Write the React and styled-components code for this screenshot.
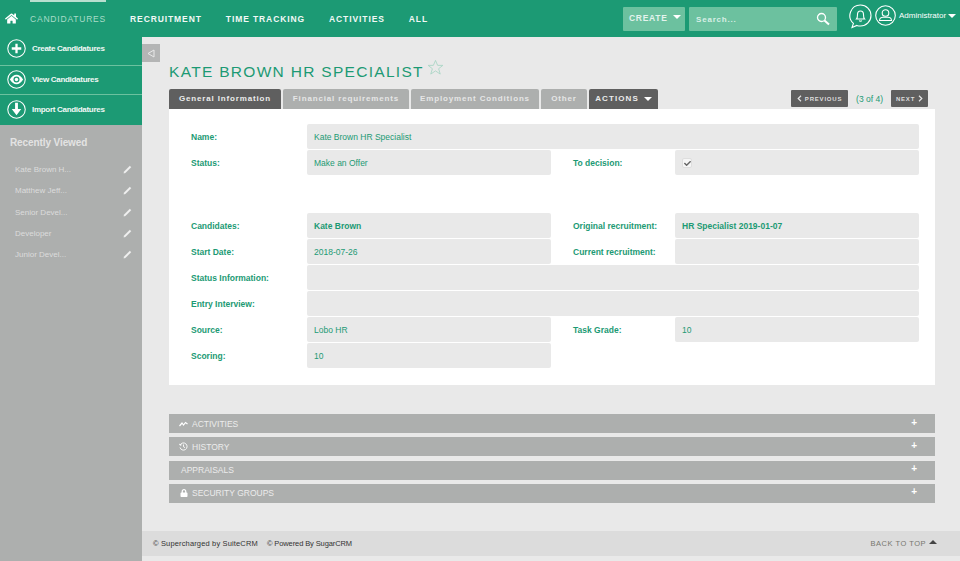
import React from "react"
import styled, { createGlobalStyle } from "styled-components"
import { FaHome, FaLock, FaCheck } from "react-icons/fa"

const GREEN = "#1c9a74"
const GREY = "#adafae"
const FONT = `"Liberation Sans", Arial, sans-serif`

const Global = createGlobalStyle`
  html, body { margin: 0; padding: 0; background: #e9e9e9; }
  body { font-family: ${FONT}; height: 561px; overflow: hidden; }
  * { box-sizing: border-box; }
`

const Page = styled.div`
  width: 960px;
  height: 561px;
  display: flex;
  flex-direction: column;
`

const Nav = styled.header`
  height: 37px;
  background: ${GREEN};
  display: flex;
  align-items: center;
  flex-shrink: 0;
  color: #fff;
`

const HomeLink = styled.div`
  width: 30px;
  display: flex;
  padding: 0 0 0 5px;
  font-size: 13px;
`

const NavItem = styled.div`
  height: 37px;
  margin-right: 24px;
  padding-top: 12px;
  font-size: 8.5px;
  font-weight: ${(p) => (p.$active ? 400 : 700)};
  letter-spacing: ${(p) => (p.$active ? 0.8 : 0.9)}px;
  color: ${(p) => (p.$active ? "#a9dcc8" : "#f2f8f6")};
  border-top: 2px solid ${(p) => (p.$active ? "#b9dfcf" : "transparent")};
`

const NavRight = styled.div`
  margin-left: auto;
  display: flex;
  align-items: flex-start;
  height: 37px;
  padding-top: 7px;
`

const CreateBtn = styled.div`
  width: 62px;
  height: 24px;
  background: #6cc19f;
  border-radius: 1px;
  margin-right: 4px;
  padding: 6px 0 0 6px;
  font-size: 8.5px;
  font-weight: 700;
  letter-spacing: 0.7px;
  color: #e4f3ed;
  display: flex;
  gap: 5px;
`

const Caret = styled.span`
  display: inline-block;
  width: 0;
  height: 0;
  margin-top: ${(p) => p.$top ?? 3}px;
  border-left: 4px solid transparent;
  border-right: 4px solid transparent;
  border-top: 4px solid ${(p) => p.$color || "#fff"};
`

const SearchBox = styled.div`
  width: 148px;
  height: 24px;
  background: #6cc19f;
  border-radius: 1px;
  margin-right: 12px;
  padding: 0 7px;
  display: flex;
  align-items: center;
  justify-content: space-between;
  font-size: 8px;
  font-weight: 700;
  letter-spacing: 0.8px;
  color: #d9efe6;
`

const BellWrap = styled.div`
  margin: -3px 3px 0 0;
  height: 25px;
`

const UserBlock = styled.div`
  display: flex;
  align-items: center;
  height: 21px;
  margin-top: -2px;
  font-size: 8px;
  color: #fff;
  width: 85px;
`

const Body = styled.div`
  flex: 1;
  display: flex;
  min-height: 0;
`

const Sidebar = styled.aside`
  width: 142px;
  flex-shrink: 0;
  background: ${GREY};
`

const SideActions = styled.div`
  background: ${GREEN};
`

const SideAction = styled.div`
  height: ${(p) => (p.$last ? 30 : 29)}px;
  display: flex;
  align-items: center;
  gap: 6px;
  padding: 0 0 ${(p) => (p.$first ? 5 : 2)}px 7px;
  font-size: 8px;
  font-weight: 700;
  letter-spacing: -0.3px;
  color: #f2f8f6;
  border-bottom: ${(p) => (p.$last ? "none" : "1px solid #6cc19f")};
`

const SideTitle = styled.div`
  margin: 12px 0 0 10px;
  font-size: 10px;
  font-weight: 700;
  letter-spacing: -0.1px;
  color: #e3e3e3;
`

const Recent = styled.div`
  margin-top: 11px;
`

const RecentRow = styled.div`
  height: 21.3px;
  display: flex;
  align-items: center;
  justify-content: space-between;
  padding: 0 10px 0 15px;
  font-size: 8px;
  color: #dcdcdc;
`

const Main = styled.main`
  flex: 1;
  display: flex;
  flex-direction: column;
  position: relative;
  background: #e9e9e9;
`

const Collapse = styled.div`
  position: absolute;
  top: 7px;
  left: 0;
  width: 18px;
  height: 18px;
  background: #b4b5b5;
  display: flex;
  align-items: center;
  justify-content: center;
`

const Content = styled.div`
  padding: 0 25px 0 27px;
`

const TitleRow = styled.div`
  display: flex;
  align-items: flex-start;
  height: 52px;
  padding-top: 25px;
`

const Title = styled.h1`
  margin: 0;
  font-size: 15.5px;
  line-height: 19px;
  font-weight: 400;
  letter-spacing: 1.3px;
  color: ${GREEN};
`

const TabBar = styled.div`
  display: flex;
  align-items: flex-end;
  height: 20px;
`

const Tab = styled.div`
  height: 20px;
  margin-right: 2px;
  padding-bottom: 1px;
  width: ${(p) => p.$w}px;
  white-space: nowrap;
  background: ${(p) => (p.$dark ? "#5f5f5f" : GREY)};
  border-radius: 2px 2px 0 0;
  font-size: 8px;
  font-weight: 700;
  letter-spacing: ${(p) => (p.$wide ? 1.1 : 0.85)}px;
  color: ${(p) => (p.$dark ? "#ececec" : "#e6e6e6")};
  display: flex;
  align-items: center;
  justify-content: center;
  gap: 5px;
`

const Pager = styled.div`
  margin-left: auto;
  margin-right: 7px;
  align-self: flex-start;
  display: flex;
  align-items: center;
  gap: 8px;
  height: 17px;
  margin-top: 1px;
  font-size: 8.5px;
  color: ${GREEN};
`

const PageBtn = styled.div`
  height: 17px;
  width: ${(p) => p.$w}px;
  background: #5f5f5f;
  border-radius: 1px;
  display: flex;
  align-items: center;
  justify-content: center;
  gap: 3px;
  font-size: 6px;
  font-weight: 700;
  letter-spacing: 0.8px;
  color: #dedede;
`

const Panel = styled.section`
  background: #fff;
  height: 276px;
  padding: 15px 16px 0 22px;
`

const Grid = styled.div`
  display: grid;
  grid-template-columns: 116px 244px 124px 244px;
  grid-auto-rows: auto;
  row-gap: 1px;
`

const Label = styled.div`
  height: 25px;
  display: flex;
  align-items: center;
  padding-left: ${(p) => (p.$right ? 22 : 0)}px;
  font-size: 8.5px;
  font-weight: 700;
  color: ${GREEN};
  white-space: nowrap;
`

const Value = styled.div`
  height: 25px;
  display: flex;
  align-items: center;
  padding: 1px 7px 0;
  background: #e9e9e9;
  border-radius: 2px;
  font-size: 8.5px;
  font-weight: ${(p) => (p.$bold ? 700 : 400)};
  color: ${GREEN};
  grid-column: ${(p) => p.$span || "auto"};
`

const Gap = styled.div`
  grid-column: 1 / -1;
  height: 36px;
`

const CheckBox = styled.span`
  width: 10px;
  height: 10px;
  background: #f6f6f6;
  border: 1px solid #dedede;
  border-radius: 2px;
  display: flex;
  align-items: center;
  justify-content: center;
  font-size: 7px;
  color: #666;
`

const Accordion = styled.div`
  margin-top: 29px;
  display: flex;
  flex-direction: column;
  gap: 4.33px;
`

const AccRow = styled.div`
  height: 19px;
  background: ${GREY};
  display: flex;
  align-items: center;
  gap: 4px;
  padding: 0 18px 0 ${(p) => (p.$plain ? 12 : 10)}px;
  font-size: 8.5px;
  color: #ececec;
`

const AccIcon = styled.span`
  width: 9px;
  display: flex;
  align-items: center;
  justify-content: center;
  font-size: 8px;
  color: #fff;
`

const Plus = styled.span`
  margin-left: auto;
  margin-top: -3px;
  font-size: 10px;
  font-weight: 700;
  color: #fff;
`

const Footer = styled.footer`
  margin-top: 28px;
  height: 25px;
  background: #dcdcdc;
  display: flex;
  align-items: center;
  padding: 0 23px 0 11px;
  font-size: 7.5px;
  color: #333;
`

const FooterText = styled.span`
  margin-right: 9px;
  letter-spacing: ${(p) => p.$spacing || 0}px;
`

const BackToTop = styled.div`
  margin-left: auto;
  display: flex;
  gap: 3px;
  font-size: 7.5px;
  letter-spacing: 0.5px;
  color: #77776f;
`

const CaretUp = styled.span`
  width: 0;
  height: 0;
  margin-top: 1px;
  border-left: 4px solid transparent;
  border-right: 4px solid transparent;
  border-bottom: 4px solid #444;
`

const Ring = ({ children }) => (
  <svg width="19" height="19" viewBox="0 0 20 20" fill="none" stroke="#fff" strokeWidth="1.1" style={{ flexShrink: 0 }}>
    <circle cx="10" cy="10" r="9.2" />
    {children}
  </svg>
)

const PlusIcon = () => (
  <Ring>
    <path d="M10 5v10M5 10h10" strokeWidth="2.4" />
  </Ring>
)

const EyeIcon = () => (
  <Ring>
    <path d="M3 10c2-3.4 4.4-5 7-5s5 1.6 7 5c-2 3.4-4.4 5-7 5s-5-1.600-7-5z" fill="#fff" stroke="none" />
    <circle cx="10" cy="10" r="3.2" fill={GREEN} stroke="none" />
    <circle cx="10" cy="10" r="1.8" fill="#fff" stroke="none" />
  </Ring>
)

const ImportIcon = () => (
  <Ring>
    <path d="M8.500 3h3v6.500h3.500L10 16 5 9.500h3.500z" fill="#fff" stroke="none" />
  </Ring>
)

const PencilIcon = () => (
  <svg width="9" height="9" viewBox="0 0 9 9" fill="none" stroke="#f1f1f1">
    <path d="M0.800 8.200l.5-1.700L6.800 1l1.200 1.200L2.500 7.700z" fill="#f1f1f1" strokeWidth="0.4" />
  </svg>
)

const SearchIcon = () => (
  <svg width="14" height="14" viewBox="0 0 14 14" fill="none" stroke="#fff">
    <circle cx="5.500" cy="5.500" r="4" strokeWidth="1.3" />
    <path d="M8.500 8.500L13 12.500" strokeWidth="2" />
  </svg>
)

const BellIcon = () => (
  <svg width="23" height="25" viewBox="0 0 23 25" fill="none" stroke="#fff" strokeWidth="1.1">
    <path d="M11.500 1a10.500 10.500 0 0 1 0 21c-1.300 0-2.500-.2-3.600-.6L3 23.500l1.400-4.200A10.500 10.500 0 0 1 11.500 1z" />
    <path d="M7.500 15c1-1 1-2.500 1-4.500 0-2 1.300-3.500 3-3.500s3 1.500 3 3.500c0 2 0 3.500 1 4.500z" />
    <path d="M10.300 16.500c.3 1 2.100 1 2.400 0" />
  </svg>
)

const UserIcon = () => (
  <svg width="21" height="21" viewBox="0 0 21 21" fill="none" stroke="#fff" strokeWidth="1.1" style={{ marginRight: 3, flexShrink: 0 }}>
    <circle cx="10.500" cy="10.500" r="9.800" />
    <circle cx="10.500" cy="8" r="3.300" />
    <path d="M4.500 15.500c0-2.200 2-3.300 3.500-3.300h5c1.500 0 3.500 1.100 3.500 3.300z" />
  </svg>
)

const TrendIcon = () => (
  <svg width="9" height="6" viewBox="0 0 9 6" fill="none" stroke="#fff" strokeWidth="1.2">
    <path d="M0.500 5L3 2l1.500 2L6.500 1.500 8.500 3" />
  </svg>
)

const HistoryIcon = () => (
  <svg width="9" height="9" viewBox="0 0 9 9" fill="none" stroke="#fff" strokeWidth="0.9">
    <path d="M1.200 3a3.600 3.600 0 1 1-.2 2.500" />
    <path d="M4.500 2.500v2.200l1.500 1" />
    <path d="M0.400 1.800l.7 1.500 1.500-.5" />
  </svg>
)

const Chevron = ({ right }) => (
  <svg width="5" height="7" viewBox="0 0 5 7" fill="none" stroke="#e6e6e6" strokeWidth="1.2">
    <path d={right ? "M1 .8l2.800 2.700L1 6.200" : "M4 .8L1.200 3.500 4 6.200"} />
  </svg>
)

const CollapseIcon = () => (
  <svg width="8" height="9" viewBox="0 0 8 9" fill="none" stroke="#e9e9e9">
    <path d="M7 1v7L1 4.500z" />
  </svg>
)

const StarIcon = () => (
  <svg width="17" height="17" viewBox="0 0 24 24" fill="none" stroke="#a8d5c4" strokeWidth="1.2" style={{ margin: "-3px 0 0 3px" }}>
    <path d="M12 2l3 7h7.400l-6 4.700 2.300 7.600L12 16.800l-6.700 4.500 2.300-7.600-6-4.700H9z" />
  </svg>
)

const navItems = ["RECRUITMENT", "TIME TRACKING", "ACTIVITIES", "ALL"]
const recent = ["Kate Brown H...", "Matthew Jeff...", "Senior Devel...", "Developer", "Junior Devel..."]

export default function App() {
  return (
    <Page>
      <Global />
      <Nav>
        <HomeLink>
          <FaHome />
        </HomeLink>
        <NavItem $active>CANDIDATURES</NavItem>
        {navItems.map((item) => (
          <NavItem key={item}>{item}</NavItem>
        ))}
        <NavRight>
          <CreateBtn>
            CREATE <Caret $top={2} />
          </CreateBtn>
          <SearchBox>
            Search...
            <SearchIcon />
          </SearchBox>
          <BellWrap>
            <BellIcon />
          </BellWrap>
          <UserBlock>
            <UserIcon />
            Administrator
            <Caret $top={0} style={{ marginLeft: 2 }} />
          </UserBlock>
        </NavRight>
      </Nav>
      <Body>
        <Sidebar>
          <SideActions>
            <SideAction $first>
              <PlusIcon />
              Create Candidatures
            </SideAction>
            <SideAction>
              <EyeIcon />
              View Candidatures
            </SideAction>
            <SideAction $last>
              <ImportIcon />
              Import Candidatures
            </SideAction>
          </SideActions>
          <SideTitle>Recently Viewed</SideTitle>
          <Recent>
            {recent.map((name) => (
              <RecentRow key={name}>
                {name}
                <PencilIcon />
              </RecentRow>
            ))}
          </Recent>
        </Sidebar>
        <Main>
          <Collapse>
            <CollapseIcon />
          </Collapse>
          <Content>
            <TitleRow>
              <Title>KATE BROWN HR SPECIALIST</Title>
              <StarIcon />
            </TitleRow>
            <TabBar>
              <Tab $dark $w={112}>General Information</Tab>
              <Tab $w={126}>Financial requirements</Tab>
              <Tab $w={128}>Employment Conditions</Tab>
              <Tab $w={46}>Other</Tab>
              <Tab $dark $wide $w={69}>
                ACTIONS <Caret $top={1} />
              </Tab>
              <Pager>
                <PageBtn $w={57}>
                  <Chevron /> PREVIOUS
                </PageBtn>
                (3 of 4)
                <PageBtn $w={37}>
                  NEXT <Chevron right />
                </PageBtn>
              </Pager>
            </TabBar>
            <Panel>
              <Grid>
                <Label>Name:</Label>
                <Value $span="2 / -1">Kate Brown HR Specialist</Value>
                <Label>Status:</Label>
                <Value>Make an Offer</Value>
                <Label $right>To decision:</Label>
                <Value>
                  <CheckBox>
                    <FaCheck />
                  </CheckBox>
                </Value>
                <Gap />
                <Label>Candidates:</Label>
                <Value $bold>Kate Brown</Value>
                <Label $right>Original recruitment:</Label>
                <Value $bold>HR Specialist 2019-01-07</Value>
                <Label>Start Date:</Label>
                <Value>2018-07-26</Value>
                <Label $right>Current recruitment:</Label>
                <Value />
                <Label>Status Information:</Label>
                <Value $span="2 / -1" />
                <Label>Entry Interview:</Label>
                <Value $span="2 / -1" />
                <Label>Source:</Label>
                <Value>Lobo HR</Value>
                <Label $right>Task Grade:</Label>
                <Value>10</Value>
                <Label>Scoring:</Label>
                <Value>10</Value>
              </Grid>
            </Panel>
            <Accordion>
              <AccRow>
                <AccIcon>
                  <TrendIcon />
                </AccIcon>
                ACTIVITIES
                <Plus>+</Plus>
              </AccRow>
              <AccRow>
                <AccIcon>
                  <HistoryIcon />
                </AccIcon>
                HISTORY
                <Plus>+</Plus>
              </AccRow>
              <AccRow $plain>
                APPRAISALS
                <Plus>+</Plus>
              </AccRow>
              <AccRow>
                <AccIcon>
                  <FaLock />
                </AccIcon>
                SECURITY GROUPS
                <Plus>+</Plus>
              </AccRow>
            </Accordion>
          </Content>
          <Footer>
            <FooterText $spacing={0.15}>© Supercharged by SuiteCRM</FooterText>
            <FooterText $spacing={-0.1}>© Powered By SugarCRM</FooterText>
            <BackToTop>
              BACK TO TOP <CaretUp />
            </BackToTop>
          </Footer>
        </Main>
      </Body>
    </Page>
  )
}
